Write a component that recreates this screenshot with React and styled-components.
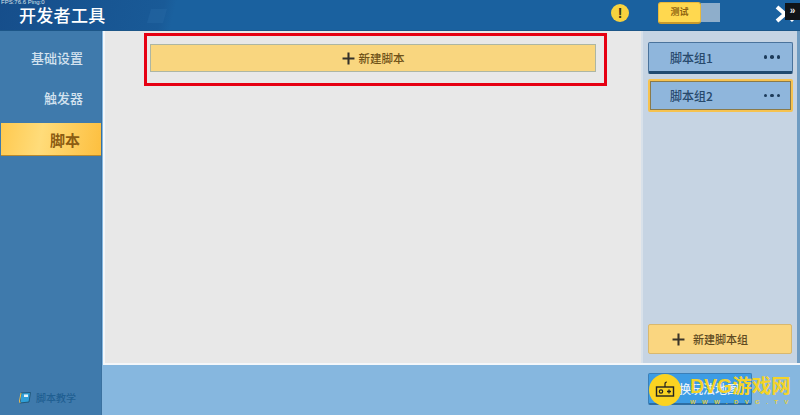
import React from 'react';
import styled, { createGlobalStyle } from 'styled-components';

const GlobalStyle = createGlobalStyle`
  html, body {
    margin: 0;
    padding: 0;
    background: #3f7aac;
  }
  body {
    font-family: "Noto Sans CJK SC", "Noto Sans", sans-serif;
  }
`;

const Page = styled.div`
  position: relative;
  width: 800px;
  height: 415px;
  overflow: hidden;
  display: flex;
  flex-direction: column;
  background: #3f7aac;
`;

const Header = styled.header`
  position: relative;
  height: 31px;
  flex: none;
  display: flex;
  align-items: center;
  padding-left: 19px;
  background: linear-gradient(104deg, #164e8b 0, #195a97 160px, #1a619f 172px, #1a619f 100%);
  border-bottom: 1px solid #1c5688;
  box-sizing: border-box;
`;

const Title = styled.h1`
  margin: 0;
  font-size: 17px;
  font-weight: 500;
  letter-spacing: 0.3px;
  color: #fff;
  line-height: 26px;
`;

const Stats = styled.span`
  position: absolute;
  left: 1px;
  top: -1px;
  font-family: "Liberation Sans", sans-serif;
  font-size: 6px;
  line-height: 7px;
  color: #d8e2ea;
`;

const Stripe = styled.i`
  width: 16px;
  height: 14px;
  margin-left: 43px;
  margin-top: 1px;
  transform: skewX(-16deg);
  background: #2568a3;
  opacity: 0.5;
`;

const HeaderTools = styled.div`
  margin-left: auto;
  display: flex;
  align-items: center;
  height: 100%;
`;

const Warning = styled.span`
  width: 18px;
  height: 18px;
  border-radius: 50%;
  background: #f7d23e;
  color: #3b3414;
  font: 700 14px/18px "Liberation Sans", sans-serif;
  text-align: center;
  margin-right: 29px;
  margin-top: -4px;
`;

const TestToggle = styled.div`
  display: flex;
  align-items: center;
  margin-right: 80px;
  margin-top: -5px;
`;

const TestButton = styled.button`
  width: 43px;
  height: 22px;
  padding: 0;
  border: 1px solid #e9b93a;
  border-bottom: 2px solid #c99a2b;
  border-radius: 3px;
  background: #ffd84f;
  color: #8f6410;
  font: 700 9px/18px "Noto Sans CJK SC", sans-serif;
`;

const TestTrack = styled.span`
  width: 19px;
  height: 19px;
  background: #8eaecb;
`;

const CloseMark = styled.svg`
  position: absolute;
  right: 5px;
  top: 5px;
`;

const CornerTag = styled.span`
  position: absolute;
  right: 0;
  top: 3px;
  width: 15px;
  height: 17px;
  background: #101418;
  color: #e8e8e8;
  font: 700 10px/15px "Liberation Sans", sans-serif;
  text-align: center;
`;

const Body = styled.div`
  flex: 1;
  min-height: 0;
  display: flex;
`;

const Sidebar = styled.nav`
  width: 101px;
  margin-left: 1px;
  flex: none;
  display: flex;
  flex-direction: column;
  background: #3f7aac;
  border-right: 1px solid #3a71a0;
  box-sizing: border-box;
`;

const NavItem = styled.div`
  height: ${(p) => (p.$active ? '32px' : '40px')};
  margin-top: ${(p) => p.$top || 0}px;
  padding-right: ${(p) => (p.$active ? '21px' : '18px')};
  display: flex;
  align-items: center;
  justify-content: flex-end;
  font-size: ${(p) => (p.$active ? '15px' : '13px')};
  font-weight: ${(p) => (p.$active ? 700 : 500)};
  color: ${(p) => (p.$active ? '#8c5c12' : '#d3e2ef')};
  background: ${(p) => (p.$active ? 'linear-gradient(100deg, #ffc94f 0, #ffdc7a 40%, #fdbf3f 100%)' : 'none')};
  box-shadow: ${(p) => (p.$active ? '0 1px 0 #b98a2e' : 'none')};
`;

const Tutorial = styled.div`
  margin-top: auto;
  margin-bottom: 10px;
  padding-left: 17px;
  display: flex;
  align-items: center;
  gap: 4px;
  font-size: 10px;
  font-weight: 500;
  line-height: 14px;
  color: #1f5f92;
`;

const Content = styled.div`
  flex: 1;
  min-width: 0;
  display: flex;
  flex-direction: column;
  padding-left: 1px;
  background: #86b7df;
`;

const Panels = styled.div`
  height: 334px;
  flex: none;
  display: flex;
  border-bottom: 2px solid #f4f7fa;
  box-sizing: border-box;
`;

const Main = styled.main`
  width: 538px;
  flex: none;
  padding: 2px 0 0 39px;
  box-sizing: border-box;
  background: #e8e8e8;
  border-left: 2px solid #f4f7fa;
`;

const Highlight = styled.div`
  width: 463px;
  height: 53px;
  box-sizing: border-box;
  padding: 8px 8px 0 3px;
  border: 3px solid #e60012;
`;

const NewScript = styled.button`
  width: 446px;
  height: 28px;
  padding: 0;
  display: flex;
  align-items: center;
  justify-content: center;
  gap: 4px;
  border: 1px solid #adb6a3;
  background: #f9d67f;
  color: #6f5218;
  font: 500 11.5px/16px "Noto Sans CJK SC", sans-serif;
`;

const Groups = styled.aside`
  flex: 1;
  display: flex;
  flex-direction: column;
  padding: 11px 4px 9px 5px;
  background: #c6d4e3;
  border-right: 3px solid #6f9cc2;
  border-left: 2px solid #d8e1ea;
`;

const GroupCard = styled.div`
  height: ${(p) => (p.$selected ? '33px' : '32px')};
  margin-bottom: 5px;
  padding: 0 12px 0 ${(p) => (p.$selected ? '19px' : '21px')};
  display: flex;
  align-items: center;
  justify-content: space-between;
  box-sizing: border-box;
  border-radius: 2px;
  background: #8fb6dc;
  color: #27496c;
  font-size: 12px;
  font-weight: 500;
  border: ${(p) => (p.$selected ? '3px solid #f6c24f' : '1px solid #4a739c')};
  border-bottom: ${(p) => (p.$selected ? '3px solid #f6c24f' : '3px solid #1f4a70')};
  outline: ${(p) => (p.$selected ? '1px solid #8a7a4a' : 'none')};
  outline-offset: -3px;
`;

const Dots = styled.span`
  display: flex;
  gap: 3px;
  margin-right: ${(p) => (p.$selected ? '-2px' : '0')};

  i {
    width: 3.5px;
    height: 3.5px;
    border-radius: 50%;
    background: #1d3b5a;
  }
`;

const NewGroup = styled.button`
  margin-top: auto;
  height: 30px;
  width: 144px;
  padding: 0 0 0 23px;
  display: flex;
  align-items: center;
  gap: 8px;
  border: 1px solid #d9b86e;
  border-radius: 2px;
  background: #fad680;
  color: #5f4b22;
  font: 500 11px/16px "Noto Sans CJK SC", sans-serif;
`;

const BottomBar = styled.div`
  flex: 1;
  display: flex;
  align-items: center;
  padding-left: 545px;
`;

const MapButton = styled.button`
  width: 104px;
  height: 32px;
  padding: 0 0 0 18px;
  margin-top: -2px;
  border: 1px solid #3a7fb8;
  border-bottom: 2px solid #2c6da3;
  border-radius: 2px;
  background: #3d9ce4;
  color: #e4f1fb;
  font: 500 12px/16px "Noto Sans CJK SC", sans-serif;
  white-space: nowrap;
  overflow: hidden;
  text-align: left;
`;

const Watermark = styled.div`
  position: absolute;
  left: 649px;
  top: 374px;
  width: 151px;
  display: flex;
  align-items: flex-start;
  gap: 9px;
`;

const BadgeIcon = styled.span`
  width: 32px;
  height: 32px;
  flex: none;
  border-radius: 50%;
  background: #fbd321;
  display: flex;
  align-items: center;
  justify-content: center;
`;

const Brand = styled.div`
  display: flex;
  flex-direction: column;
  color: #f5d327;
`;

const BrandName = styled.span`
  font: 700 19.5px/24px "Liberation Sans", "Noto Sans CJK SC", sans-serif;
  white-space: nowrap;
`;

const BrandUrl = styled.span`
  font: 700 6px/8px "Liberation Sans", sans-serif;
  letter-spacing: 6.4px;
  white-space: nowrap;
  opacity: 0.85;
`;

const Plus = ({ size, color }) => (
  <svg width={size} height={size} viewBox="0 0 12 12">
    <path d="M6 0.5v11M0.5 6h11" stroke={color} strokeWidth="1.9" fill="none" />
  </svg>
);

const BookIcon = () => (
  <svg width="14" height="14" viewBox="0 0 14 14">
    <path d="M3 2 L12.5 1.5 L11 11 L2 12 Z" fill="#2f9fd8" stroke="#1d4a68" strokeWidth="0.8" />
    <path d="M2 12 L1.5 10 L3 2" fill="none" stroke="#f0c050" strokeWidth="1" />
    <rect x="6" y="3.5" width="4" height="2.5" fill="#e8f4fa" />
  </svg>
);

const groups = [
  { name: '脚本组1', selected: false },
  { name: '脚本组2', selected: true },
];

const App = () => {
  return (
    <Page>
      <GlobalStyle />
      <Header>
        <Stats>FPS:76.6 Ping:0</Stats>
        <Title>开发者工具</Title>
        <Stripe />
        <HeaderTools>
          <Warning>!</Warning>
          <TestToggle>
            <TestButton>测试</TestButton>
            <TestTrack />
          </TestToggle>
        </HeaderTools>
        <CloseMark width="20" height="18" viewBox="0 0 20 18">
          <path d="M2 2 L10 9 L2 16" stroke="#fff" strokeWidth="4" fill="none" />
          <path d="M16 14 L18 16" stroke="#fff" strokeWidth="3" fill="none" />
        </CloseMark>
        <CornerTag>»</CornerTag>
      </Header>
      <Body>
        <Sidebar>
          <NavItem $top={6}>基础设置</NavItem>
          <NavItem>触发器</NavItem>
          <NavItem $active $top={6}>脚本</NavItem>
          <Tutorial>
            <BookIcon />
            脚本教学
          </Tutorial>
        </Sidebar>
        <Content>
          <Panels>
            <Main>
              <Highlight>
                <NewScript>
                  <Plus size={13} color="#33302a" />
                  新建脚本
                </NewScript>
              </Highlight>
            </Main>
            <Groups>
              {groups.map((group) => (
                <GroupCard key={group.name} $selected={group.selected}>
                  {group.name}
                  <Dots $selected={group.selected}><i /><i /><i /></Dots>
                </GroupCard>
              ))}
              <NewGroup>
                <Plus size={13} color="#3a3428" />
                新建脚本组
              </NewGroup>
            </Groups>
          </Panels>
          <BottomBar>
            <MapButton>切换玩法地图</MapButton>
          </BottomBar>
        </Content>
      </Body>
      <Watermark>
        <BadgeIcon>
          <svg width="20" height="20" viewBox="0 0 20 20">
            <path d="M10 7 V4 Q10 2 12 2" stroke="#222" strokeWidth="1.2" fill="none" />
            <rect x="1.5" y="7" width="17" height="9" fill="none" stroke="#222" strokeWidth="1.4" />
            <circle cx="6" cy="11.5" r="1.7" fill="none" stroke="#222" strokeWidth="1.2" />
            <path d="M12 11.5h4M14 9.5v4" stroke="#222" strokeWidth="1.3" />
          </svg>
        </BadgeIcon>
        <Brand>
          <BrandName>DVG游戏网</BrandName>
          <BrandUrl>WWW.DVG.TV</BrandUrl>
        </Brand>
      </Watermark>
    </Page>
  );
};

export default App;
